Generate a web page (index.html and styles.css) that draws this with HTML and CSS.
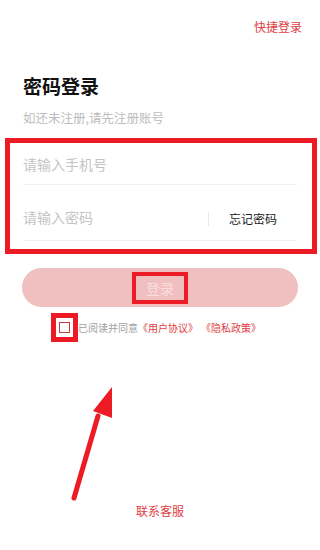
FILE: index.html
```html
<!DOCTYPE html>
<html lang="zh-CN">
<head>
    <meta charset="UTF-8">
    <meta name="viewport" content="width=device-width, initial-scale=1.0">
    <title>密码登录</title>
    <link rel="stylesheet" href="styles.css">
</head>
<body>
    <div class="page">
        <div class="top-bar">
            <a class="quick-login">快捷登录</a>
        </div>

        <h1 class="title">密码登录</h1>
        <div class="subtitle">如还未注册,请先注册账号</div>

        <div class="form-box">
            <div class="field field-phone">
                <input type="text" placeholder="请输入手机号">
            </div>
            <div class="field field-pwd">
                <input type="password" placeholder="请输入密码">
                <span class="forgot">忘记密码</span>
            </div>
        </div>

        <button class="login-btn"><span class="login-text">登录</span></button>

        <div class="agree">
            <span class="check-mark"><span class="check"></span></span>
            <span class="agree-text">已阅读并同意</span>
            <span class="link">《用户协议》</span>
            <span class="link">《隐私政策》</span>
        </div>

        <div class="footer">联系客服</div>

        <svg class="arrow" viewBox="0 0 60 130" xmlns="http://www.w3.org/2000/svg">
            <line x1="7" y1="120" x2="31" y2="38" stroke="#ed1c24" stroke-width="5" stroke-linecap="round"/>
            <polygon points="45,9 26,33 45,40" fill="#ed1c24"/>
        </svg>
    </div>
</body>
</html>
```

FILE: styles.css
```css
* {
    box-sizing: border-box;
}
body {
    margin: 0;
    background-color: #fff;
    font-family: "Noto Sans CJK SC", "Noto Sans", sans-serif;
    color: #1d1d1f;
}
.page {
    position: relative;
    display: flex;
    flex-direction: column;
    min-height: 100vh;
}
.top-bar {
    display: flex;
    justify-content: flex-end;
    padding: 19px 18px 0 0;
}
.quick-login {
    font-size: 12px;
    line-height: 16px;
    color: #e03d43;
}
.title {
    margin: 38px 0 0 23px;
    font-size: 19px;
    line-height: 26px;
    font-weight: bold;
    color: #111;
}
.subtitle {
    margin: 11px 0 0 23px;
    font-size: 12.5px;
    line-height: 16px;
    color: #bdbdbd;
}
.form-box {
    margin: 12px 3px 0 5px;
    border: 5px solid #ed1c24;
    padding: 0 15px 8px 13px;
}
.field {
    display: flex;
    align-items: center;
    border-bottom: 1px solid #efefef;
}
.field-phone {
    height: 42px;
}
.field-pwd {
    height: 56px;
    padding-top: 9px;
}
.field input {
    flex: 1;
    min-width: 0;
    border: none;
    outline: none;
    padding: 0;
    font-family: inherit;
    font-size: 14px;
    background: transparent;
}
.field input::placeholder {
    color: #c4c4c4;
}
.forgot {
    padding: 0 20px;
    border-left: 1px solid #e8e8e8;
    font-size: 12px;
    line-height: 14px;
    color: #222;
}
.field-pwd .forgot {
    margin-top: 4px;
}
.login-btn {
    display: flex;
    justify-content: center;
    align-items: center;
    margin: 14px 22px 0 22px;
    height: 39px;
    border: none;
    border-radius: 20px;
    background-color: #f0bfc0;
    font-family: inherit;
    padding: 0;
}
.login-text {
    padding: 3px 10px;
    border: 4px solid #ed1c24;
    font-size: 14px;
    line-height: 18px;
    color: #f8dede;
}
.agree {
    display: flex;
    justify-content: center;
    align-items: center;
    margin-top: 6px;
    padding-right: 8px;
    font-size: 10px;
    line-height: 14px;
}
.check-mark {
    display: flex;
    padding: 4px 3px;
    border: 5px solid #ed1c24;
}
.check {
    width: 11px;
    height: 11px;
    border: 1px solid #c9383e;
}
.agree-text {
    color: #a0a0a0;
}
.link {
    color: #e03d43;
}
.link + .link {
    margin-left: 3px;
}
.footer {
    margin-top: auto;
    padding-bottom: 31px;
    text-align: center;
    font-size: 12px;
    line-height: 16px;
    color: #e03d43;
}
.arrow {
    position: absolute;
    left: 67px;
    top: 378px;
    width: 60px;
    height: 130px;
}
```
